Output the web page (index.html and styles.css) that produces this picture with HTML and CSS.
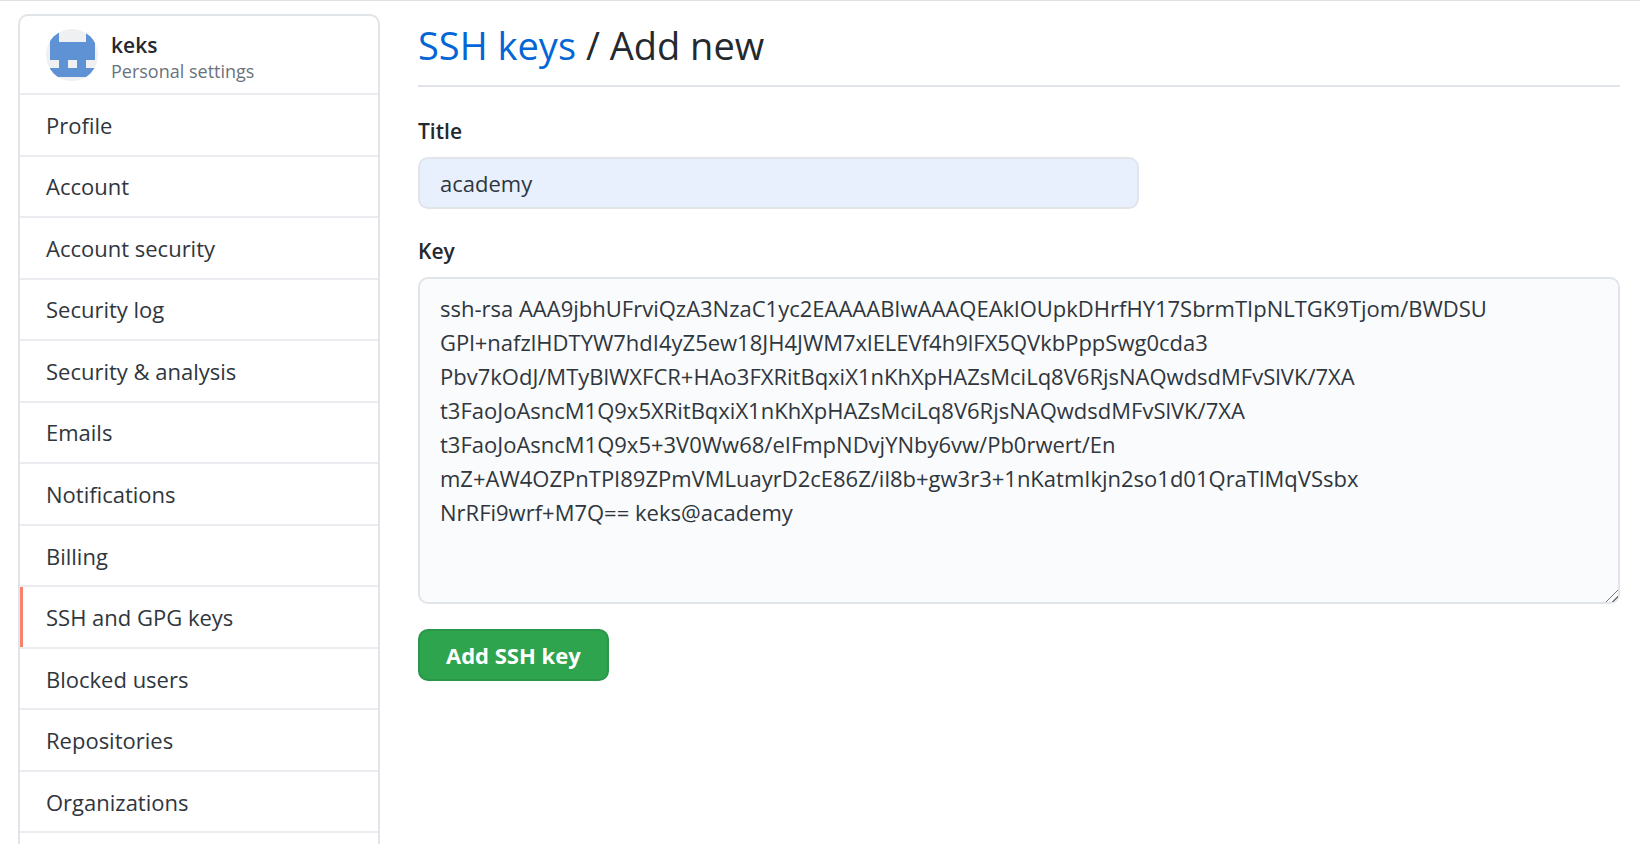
FILE: index.html
```html
<!DOCTYPE html>
<html lang="en">
<head>
<meta charset="utf-8">
<title>Add new SSH key</title>
<link rel="stylesheet" href="styles.css">
</head>
<body>
<div class="page">
  <nav class="sidebar" aria-label="Personal settings">
    <header class="profile">
      <svg class="avatar" viewBox="0 0 52 52" aria-hidden="true">
        <defs><clipPath id="round"><circle cx="26" cy="26" r="26"/></clipPath></defs>
        <g clip-path="url(#round)">
          <rect width="52" height="52" fill="#eff0f2"/>
          <path fill="#5e92d4" d="M4 0h9v13h27V0h9v31h-9v8h9v9H4v-9h9v-8H4zM22 31v8h9v-8z" fill-rule="evenodd"/>
        </g>
      </svg>
      <div class="who">
        <span class="name">keks</span>
        <span class="sub">Personal settings</span>
      </div>
    </header>
    <ul class="menu">
      <li class="row"><a class="link" href="#">Profile</a></li>
      <li class="row"><a class="link" href="#">Account</a></li>
      <li class="row"><a class="link" href="#">Account security</a></li>
      <li class="row"><a class="link" href="#">Security log</a></li>
      <li class="row"><a class="link" href="#">Security &amp; analysis</a></li>
      <li class="row"><a class="link" href="#">Emails</a></li>
      <li class="row"><a class="link" href="#">Notifications</a></li>
      <li class="row"><a class="link" href="#">Billing</a></li>
      <li class="row"><a class="link current" href="#" aria-current="page">SSH and GPG keys</a></li>
      <li class="row"><a class="link" href="#">Blocked users</a></li>
      <li class="row"><a class="link" href="#">Repositories</a></li>
      <li class="row"><a class="link" href="#">Organizations</a></li>
      <li class="row"></li>
    </ul>
  </nav>
  <main class="content">
    <h1 class="heading"><a class="crumb" href="#">SSH keys</a> / Add new</h1>
    <form class="form">
      <label class="label" for="title">Title</label>
      <input class="field title" id="title" type="text" value="academy">
      <label class="label" for="key">Key</label>
      <textarea class="field key" id="key" spellcheck="false">ssh-rsa AAA9jbhUFrviQzA3NzaC1yc2EAAAABIwAAAQEAklOUpkDHrfHY17SbrmTIpNLTGK9Tjom/BWDSU
GPl+nafzlHDTYW7hdI4yZ5ew18JH4JWM7xlELEVf4h9lFX5QVkbPppSwg0cda3
Pbv7kOdJ/MTyBlWXFCR+HAo3FXRitBqxiX1nKhXpHAZsMciLq8V6RjsNAQwdsdMFvSlVK/7XA
t3FaoJoAsncM1Q9x5XRitBqxiX1nKhXpHAZsMciLq8V6RjsNAQwdsdMFvSlVK/7XA
t3FaoJoAsncM1Q9x5+3V0Ww68/eIFmpNDvjYNby6vw/Pb0rwert/En
mZ+AW4OZPnTPI89ZPmVMLuayrD2cE86Z/il8b+gw3r3+1nKatmIkjn2so1d01QraTlMqVSsbx
NrRFi9wrf+M7Q== keks@academy</textarea>
      <button class="submit" type="submit">Add SSH key</button>
    </form>
  </main>
</div>
</body>
</html>
```
FILE: styles.css
```css
* { box-sizing: border-box; }

body {
  margin: 0;
  background: #fff;
  color: #24292e;
  font: 22px/32px "Open Sans", "Noto Sans", sans-serif;
}

.page {
  display: flex;
  align-items: flex-start;
  gap: 38px;
  height: 100vh;
  overflow: hidden;
  padding: 13px 20px 0 18px;
  border-top: 1px solid #dfe1e6;
}

.sidebar {
  flex: 0 0 362px;
  border: 2px solid #e1e4e8;
  border-radius: 10px;
}

.profile {
  display: flex;
  align-items: flex-start;
  gap: 13px;
  padding: 13px 26px 9px;
  border-bottom: 2px solid #eaecef;
}

.avatar { width: 52px; height: 52px; }

.who { display: flex; flex-direction: column; padding-top: 3px; line-height: 26px; }
.name { font-weight: 600; font-size: 21px; }
.sub { font-size: 18px; color: #6a737d; }

.menu {
  display: grid;
  grid-auto-rows: 1fr;
  min-height: 800px;
  margin: 0;
  padding: 0;
  list-style: none;
}

.row { display: flex; border-bottom: 2px solid #eaecef; }

.link {
  flex: 1;
  display: flex;
  align-items: center;
  padding: 0 26px;
  color: #2f363d;
  text-decoration: none;
}

.current { box-shadow: inset 3px 0 #f9826c; }

.content { flex: 1; min-width: 0; }

.heading {
  margin: 0 0 28px;
  padding: 5px 0 14px;
  border-bottom: 2px solid #e1e4e8;
  font-size: 38px;
  line-height: 52px;
  font-weight: 400;
}

.crumb { color: #0366d6; text-decoration: none; }

.form { display: flex; flex-direction: column; align-items: flex-start; }

.label { margin-bottom: 10px; font-weight: 600; font-size: 21px; }

.field {
  padding: 8px 20px;
  border: 2px solid #e1e4e8;
  border-radius: 10px;
  color: #2f363d;
  font: inherit;
}

.title {
  width: 60%;
  height: 52px;
  margin-bottom: 26px;
  background: #e8f0fe;
}

.key {
  width: 100%;
  height: 327px;
  margin-bottom: 25px;
  padding-top: 12px;
  background: #fafbfc;
  line-height: 34px;
  resize: vertical;
}

/* Two diagonal grip lines in the resize corner */
.key::-webkit-resizer {
  background: linear-gradient(135deg,
    transparent 0 58%, #777 58% 63%,
    transparent 63% 80%, #777 80% 85%, transparent 85%);
}

.submit {
  padding: 8px 26px;
  border: 2px solid #29964a;
  border-radius: 10px;
  background: #2ea44f;
  color: #fff;
  font: inherit;
  font-weight: 700;
}
```
